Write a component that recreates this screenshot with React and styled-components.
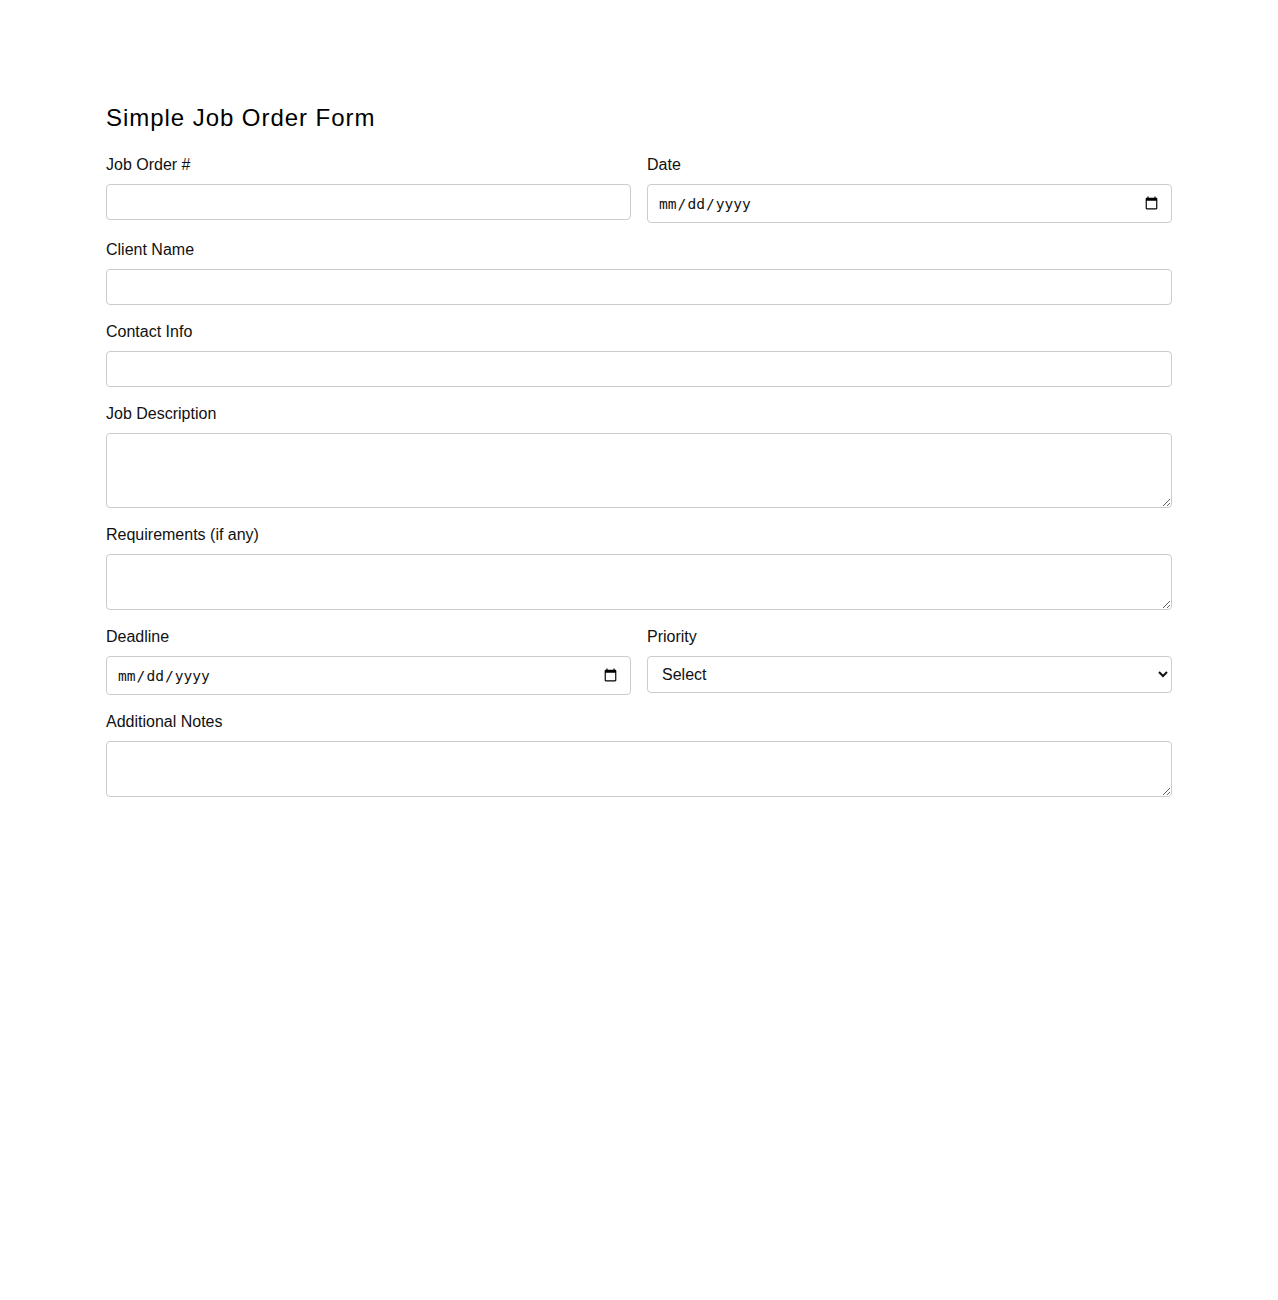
import React, { useState } from "react";
import styled, { createGlobalStyle } from "styled-components";

const GlobalStyle = createGlobalStyle`
  body {
    margin: 0;
    background: #fff;
    font-family: "Liberation Sans", Arial, sans-serif;
    color: #111;
  }
  * {
    box-sizing: border-box;
  }
`;

const App = () => {
  const [form, setForm] = useState({
    jobOrder: "",
    date: "",
    clientName: "",
    contactInfo: "",
    description: "",
    requirements: "",
    deadline: "",
    priority: "",
    notes: "",
  });

  const update = field => e => setForm({ ...form, [field]: e.target.value });

  return (
    <Page>
      <GlobalStyle />
      <Form onSubmit={e => e.preventDefault()}>
        <Title>Simple Job Order Form</Title>

        <Row>
          <Field>
            <Label htmlFor="jobOrder">Job Order #</Label>
            <TextInput id="jobOrder" value={form.jobOrder} onChange={update("jobOrder")} />
          </Field>
          <Field>
            <Label htmlFor="date">Date</Label>
            <DateInput id="date" type="date" value={form.date} onChange={update("date")} />
          </Field>
        </Row>

        <Field>
          <Label htmlFor="clientName">Client Name</Label>
          <TextInput id="clientName" value={form.clientName} onChange={update("clientName")} />
        </Field>

        <Field>
          <Label htmlFor="contactInfo">Contact Info</Label>
          <TextInput id="contactInfo" value={form.contactInfo} onChange={update("contactInfo")} />
        </Field>

        <Field>
          <Label htmlFor="description">Job Description</Label>
          <TextArea id="description" $height={75} value={form.description} onChange={update("description")} />
        </Field>

        <Field>
          <Label htmlFor="requirements">Requirements (if any)</Label>
          <TextArea id="requirements" $height={56} value={form.requirements} onChange={update("requirements")} />
        </Field>

        <Row>
          <Field>
            <Label htmlFor="deadline">Deadline</Label>
            <DateInput id="deadline" type="date" value={form.deadline} onChange={update("deadline")} />
          </Field>
          <Field>
            <Label htmlFor="priority">Priority</Label>
            <Select id="priority" value={form.priority} onChange={update("priority")}>
              <option value="">Select</option>
              <option value="low">Low</option>
              <option value="medium">Medium</option>
              <option value="high">High</option>
            </Select>
          </Field>
        </Row>

        <Field>
          <Label htmlFor="notes">Additional Notes</Label>
          <TextArea id="notes" $height={56} value={form.notes} onChange={update("notes")} />
        </Field>
      </Form>
    </Page>
  );
};

const Page = styled.div`
  padding: 104px 0 40px;
`;

const Form = styled.form`
  max-width: 1066px;
  margin: 0 auto;
  display: flex;
  flex-direction: column;
  gap: 16px;
`;

const Title = styled.h2`
  margin: 0 0 6px;
  font-size: 24px;
  font-weight: normal;
  letter-spacing: 0.95px;
  color: #000;
`;

const Row = styled.div`
  display: grid;
  grid-template-columns: 1fr 1fr;
  gap: 16px;
`;

const Field = styled.div`
  display: flex;
  flex-direction: column;
`;

const Label = styled.label`
  font-size: 16px;
  line-height: 20px;
  padding-top: 1px;
  margin-bottom: 9px;
  color: #111;
`;

const TextInput = styled.input`
  height: 36px;
  padding: 8px;
  border: 1px solid #ccc;
  border-radius: 4px;
  font-family: "Liberation Sans", Arial, sans-serif;
  font-size: 16px;
`;

const DateInput = styled.input`
  height: 39px;
  padding: 8px 10px;
  border: 1px solid #ccc;
  border-radius: 4px;
  font-family: "DejaVu Sans Mono", monospace;
  font-size: 14.6px;
  color: #111;
`;

const Select = styled.select`
  height: 37px;
  padding: 0 10px;
  border: 1px solid #ccc;
  border-radius: 4px;
  background: #fff;
  font-family: "Liberation Sans", Arial, sans-serif;
  font-size: 16px;
  color: #111;
`;

const TextArea = styled.textarea`
  height: ${p => p.$height}px;
  padding: 8px;
  border: 1px solid #ccc;
  border-radius: 4px;
  font-family: "Liberation Sans", Arial, sans-serif;
  font-size: 16px;
`;

export default App;
